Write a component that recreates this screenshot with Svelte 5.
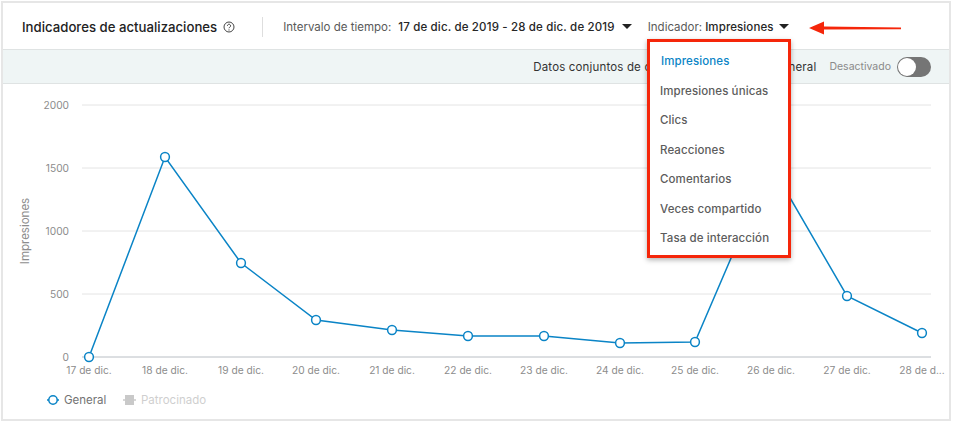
<script>
  const grid = [
    { label: '2000', y: 105 },
    { label: '1500', y: 168 },
    { label: '1000', y: 231 },
    { label: '500', y: 294 },
    { label: '0', y: 357 }
  ];

  const points = [
    { x: 89, y: 357, day: '17 de dic.' },
    { x: 165, y: 157, day: '18 de dic.' },
    { x: 241, y: 263, day: '19 de dic.' },
    { x: 316, y: 320, day: '20 de dic.' },
    { x: 392, y: 330, day: '21 de dic.' },
    { x: 468, y: 336, day: '22 de dic.' },
    { x: 544, y: 336, day: '23 de dic.' },
    { x: 620, y: 343, day: '24 de dic.' },
    { x: 695, y: 342, day: '25 de dic.' },
    { x: 771, y: 165, day: '26 de dic.' },
    { x: 847, y: 296, day: '27 de dic.' },
    { x: 922, y: 333, day: '28 de d...' }
  ];

  const line = points.map((p) => `${p.x},${p.y}`).join(' ');

  const metrics = [
    'Impresiones',
    'Impresiones únicas',
    'Clics',
    'Reacciones',
    'Comentarios',
    'Veces compartido',
    'Tasa de interacción'
  ];
</script>

<div class="card">
  <header class="head">
    <h2 class="title">Indicadores de actualizaciones</h2>
    <svg class="help" width="12" height="12" viewBox="0 0 12 12">
      <circle cx="6" cy="6" r="5" fill="none" stroke="#444" stroke-width="1" />
      <path d="M4.4 4.8a1.6 1.6 0 1 1 2.4 1.4c-.5.3-.8.5-.8 1" fill="none" stroke="#444" stroke-width="1" />
      <circle cx="6" cy="8.9" r=".6" fill="#444" />
    </svg>
    <div class="divider"></div>
    <div class="filter range">
      <span class="filter-label">Intervalo de tiempo:</span>
      <span class="filter-value">17 de dic. de 2019 - 28 de dic. de 2019</span>
      <span class="caret"></span>
    </div>
    <div class="filter metric">
      <span class="filter-label">Indicador:</span>
      <span class="filter-value">Impresiones</span>
      <span class="caret"></span>
    </div>
  </header>

  <div class="band">
    <span class="band-text">Datos conjuntos de orgánico y de pago en General</span>
    <span class="band-state">Desactivado</span>
    <span class="switch"><span class="knob"></span></span>
  </div>

  <svg class="chart" width="945" height="335" viewBox="3 84 945 335">
    {#each grid as g}
      <line x1="82" x2="931" y1={g.y} y2={g.y} class={g.y === 357 ? 'axis' : 'rule'} />
      <text x="69" y={g.y + 4} text-anchor="end" class="tick">{g.label}</text>
    {/each}
    <text class="tick side" transform="translate(29 231) rotate(-90)" text-anchor="middle">Impresiones</text>
    {#each points as p}
      <text x={p.x} y="374" text-anchor="middle" class="tick">{p.day}</text>
    {/each}
    <polyline points={line} class="series" />
    {#each points as p}
      <circle cx={p.x} cy={p.y} r="4.4" class="dot" />
    {/each}

    <line x1="47" x2="59" y1="400" y2="400" stroke="#0a84c6" stroke-width="1.5" />
    <circle cx="53" cy="400" r="4.2" class="dot" />
    <text x="64" y="404" class="legend">General</text>
    <line x1="123" x2="136" y1="400" y2="400" stroke="#c9c9c9" stroke-width="1.5" />
    <rect x="125" y="395" width="9" height="10" fill="#c9c9c9" />
    <text x="141" y="404" class="legend off">Patrocinado</text>
  </svg>

  <ul class="menu">
    {#each metrics as m, i}
      <li class:active={i === 0}>{m}</li>
    {/each}
  </ul>

  <svg class="arrow" width="94" height="18" viewBox="0 0 94 18">
    <path d="M0 9 15 2.5V7.6L92 8.4V10.2L15 10.6V15.5Z" fill="#f5260a" />
  </svg>
</div>

<style>
  :global(body) {
    margin: 0;
    background: #fff;
  }

  .card {
    position: relative;
    box-sizing: border-box;
    width: 950px;
    height: 420px;
    margin: 1px 0 0 1px;
    border: 2px solid #e6e6e6;
    background: #fff;
    font-family: Inter, "Liberation Sans", sans-serif;
    overflow: hidden;
  }

  .head {
    display: flex;
    align-items: center;
    box-sizing: border-box;
    height: 47px;
    padding: 1px 0 0 19px;
    border-bottom: 1px solid #dfe3e3;
  }

  .title {
    margin: 0;
    font-size: 13.2px;
    font-weight: 500;
    color: #222;
  }

  .help {
    margin-left: 6px;
  }

  .divider {
    width: 1px;
    height: 20px;
    margin: 0 20px 0 27px;
    background: #dedede;
  }

  .filter {
    display: flex;
    align-items: center;
    font-size: 11.5px;
    white-space: nowrap;
  }

  .filter-label {
    color: #595959;
  }

  .filter-value {
    margin-left: 7px;
    color: #262626;
    font-weight: 500;
    letter-spacing: 0.16px;
  }

  .metric {
    margin-left: 16px;
  }

  .metric .filter-value {
    margin-left: 3px;
    letter-spacing: 0.1px;
  }

  .metric .caret {
    margin-left: 5px;
  }

  .caret {
    width: 0;
    height: 0;
    margin-left: 7px;
    border-left: 5px solid transparent;
    border-right: 5px solid transparent;
    border-top: 5px solid #222;
  }

  .band {
    display: flex;
    align-items: center;
    justify-content: flex-end;
    height: 33px;
    padding-right: 18px;
    background: #eff5f5;
    border-bottom: 1px solid #dfe3e3;
    font-size: 11.5px;
    white-space: nowrap;
  }

  .band-text {
    color: #333;
    letter-spacing: 0.16px;
  }

  .band-state {
    margin-left: 13px;
    font-size: 10.5px;
    color: #8a8a8a;
  }

  .switch {
    display: flex;
    align-items: center;
    box-sizing: border-box;
    width: 34px;
    height: 20px;
    margin-left: 6px;
    padding: 1px;
    border-radius: 10px;
    background: #757575;
  }

  .knob {
    width: 18px;
    height: 18px;
    border-radius: 50%;
    background: #fff;
  }

  .chart {
    display: block;
  }

  .rule {
    stroke: #e4e4e4;
    stroke-width: 1;
  }

  .axis {
    stroke: #b9bec4;
    stroke-width: 1;
  }

  .tick {
    font-size: 10.2px;
    fill: #8c8c8c;
  }

  .tick.side {
    font-size: 11.5px;
  }

  .series {
    fill: none;
    stroke: #0a84c6;
    stroke-width: 1.5;
  }

  .dot {
    fill: #fff;
    stroke: #0a84c6;
    stroke-width: 1.5;
  }

  .legend {
    font-size: 11.5px;
    fill: #737373;
  }

  .legend.off {
    fill: #cfcfcf;
  }

  .menu {
    position: absolute;
    left: 644px;
    top: 36px;
    box-sizing: border-box;
    width: 144px;
    height: 219px;
    margin: 0;
    padding: 5px 0 0 10px;
    list-style: none;
    background: #fff;
    border: 3px solid #f5260a;
    box-shadow: 0 2px 5px rgba(0, 0, 0, 0.3);
  }

  .menu li {
    height: 29.5px;
    line-height: 29.5px;
    font-size: 11.5px;
    font-weight: 500;
    letter-spacing: 0.1px;
    color: #5c5c5c;
    white-space: nowrap;
  }

  .menu li.active {
    padding-left: 1px;
    color: #0a84c6;
  }

  .arrow {
    position: absolute;
    left: 806px;
    top: 16px;
  }
</style>
